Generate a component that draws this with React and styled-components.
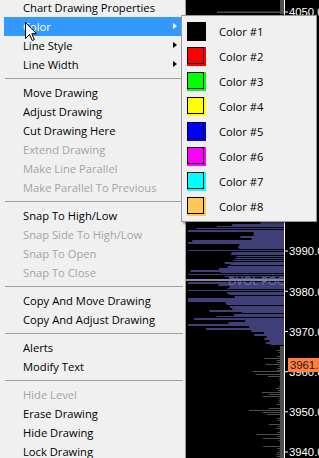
import React from "react";
import styled, { createGlobalStyle } from "styled-components";

const Global = createGlobalStyle`
  html, body { margin: 0; padding: 0; background: #000; }
  body { width: 319px; height: 458px; overflow: hidden; }
`;

const Screen = styled.div`
  position: relative;
  width: 319px;
  height: 458px;
  overflow: hidden;
  display: flex;
  align-items: flex-start;
  background: #000;
  font-family: "Open Sans", "Noto Sans", sans-serif;
`;

const Menu = styled.div`
  flex: none;
  width: 185px;
  margin-top: -2px;
  background: #f0f0f0;
  border-right: 1px solid #a0a0a0;
  display: flex;
  flex-direction: column;
`;

const Item = styled.div`
  position: relative;
  height: 19px;
  margin: 0 3px 0 4px;
  padding-left: 19px;
  display: flex;
  align-items: center;
  font-size: 11.2px;
  white-space: nowrap;
  color: ${(p) => (p.$active ? "#fff" : p.$disabled ? "#a4a4a4" : "#000")};
  background: ${(p) => (p.$active ? "#3399ff" : "transparent")};
`;

const Arrow = styled.span`
  position: absolute;
  right: 5px;
  top: 6px;
  width: 0;
  height: 0;
  border-top: 3.5px solid transparent;
  border-bottom: 3.5px solid transparent;
  border-left: 4px solid ${(p) => (p.$active ? "#fff" : "#000")};
`;

const Sep = styled.div`
  height: 9px;
  margin: 0 2px 0 5px;
  display: flex;
  align-items: center;
  &::after {
    content: "";
    flex: 1;
    height: 1px;
    background: #a0a0a0;
  }
`;

const Chart = styled.div`
  flex: 1;
  align-self: stretch;
  height: 458px;
  background: #000;
  svg { display: block; }
`;

const SubMenu = styled.div`
  position: absolute;
  left: 181px;
  top: 15px;
  width: 136px;
  box-sizing: border-box;
  padding: 3px 2px 2px 5px;
  background: #f0f0f0;
  border: 1px solid #979797;
  box-shadow: 2px 2px 2px rgba(0, 0, 0, 0.35);
  display: flex;
  flex-direction: column;
`;

const ColorRow = styled.div`
  height: 25px;
  display: flex;
  align-items: center;
  gap: 13px;
  font-size: 11.2px;
  color: #000;
  white-space: nowrap;
`;

const Swatch = styled.span`
  position: relative;
  flex: none;
  width: 19px;
  height: 19px;
  background: ${(p) => p.$c};
  &::after {
    content: "";
    position: absolute;
    left: 0;
    top: 0;
    width: 17px;
    height: 17px;
    box-sizing: border-box;
    border: 1px solid #000;
  }
`;

const Cursor = styled.svg`
  position: absolute;
  left: 25px;
  top: 22px;
  overflow: visible;
`;

function rng(seed) {
  let s = seed;
  return () => {
    s = (s * 16807) % 2147483647;
    return (s - 1) / 2147483646;
  };
}

const AX = 98;
const AXIS_FONT = "'Liberation Sans', Arial, sans-serif";

function buildBars() {
  const r = rng(12345);
  const purple = [];
  for (let y = 218; y < 346; y += 2) {
    const t = (y - 218) / 128;
    const env = 18 + 42 * Math.sin(Math.PI * Math.min(1, t * 1.05));
    let len = env + (r() - 0.5) * 14;
    if (r() < 0.3) len += 15 + r() * 55;
    purple.push({ y, h: r() < 0.3 ? 1 : 2, len: Math.min(AX - 2, Math.max(4, len)) });
  }
  const grey = [];
  for (let y = 346; y < 458; y += 2) {
    let len = 3 + r() * 5;
    if (r() < 0.12) len += 8 + r() * 16;
    grey.push({ y, len });
  }
  grey.push({ y: 371, len: 31 });
  grey.push({ y: 410, len: 35 });
  return { purple, grey };
}

const { purple, grey } = buildBars();

const ticks = [
  { y: 12, label: "4050.0" },
  { y: 251, label: "3990.0" },
  { y: 291.3, label: "3980.0" },
  { y: 331.5, label: "3970.0" },
  { y: 371.7, label: "3960.0" },
  { y: 411.8, label: "3950.0" },
  { y: 452, label: "3940.0" },
];

function ChartDrawing() {
  return (
    <svg width="133" height="458" viewBox="0 0 133 458">
      <defs>
        <clipPath id="plot">
          <rect x="0" y="0" width={AX} height="458" />
        </clipPath>
      </defs>
      <rect x={AX - 4} y="0" width="4" height="14" fill="#4e4e4e" />
      <rect x="31" y="11.5" width={AX - 31} height="1.5" fill="#505050" />
      {purple.map((b, i) => (
        <rect key={"p" + i} x={AX - b.len} y={b.y} width={b.len} height={b.h} fill="#403f78" />
      ))}
      <rect x={AX - 4} y="346" width="4" height="112" fill="#4e4e4e" />
      {grey.map((b, i) => (
        <rect key={"g" + i} x={AX - b.len} y={b.y} width={b.len} height="1" fill="#4e4e4e" />
      ))}
      <g clipPath="url(#plot)">
        <rect x="0" y="279" width={AX} height="2" fill="#8a8a9c" />
        <text x="42" y="284.5" fill="#7373a8" fontSize="11.5" fontFamily="'Open Sans', sans-serif">
          DVOL POC
        </text>
      </g>
      <rect x={AX} y="0" width="1" height="458" fill="#fff" />
      {ticks.map((t) => (
        <g key={t.label}>
          <rect x={AX} y={t.y - 0.5} width="4" height="1" fill="#fff" />
          <text x="103" y={t.y + 4.2} fill="#fff" fontSize="11.3" fontFamily={AXIS_FONT}>
            {t.label}
          </text>
        </g>
      ))}
      <rect x="102" y="358" width="31" height="14" fill="#ff8040" />
      <text x="104" y="369.3" fill="#1a1a1a" fontSize="11.3" fontFamily={AXIS_FONT}>
        3961.5
      </text>
    </svg>
  );
}

const menu = [
  { t: "Chart Drawing Properties" },
  { t: "Color", sub: true, active: true },
  { t: "Line Style", sub: true },
  { t: "Line Width", sub: true },
  "sep",
  { t: "Move Drawing" },
  { t: "Adjust Drawing" },
  { t: "Cut Drawing Here" },
  { t: "Extend Drawing", dis: true },
  { t: "Make Line Parallel", dis: true },
  { t: "Make Parallel To Previous", dis: true },
  "sep",
  { t: "Snap To High/Low" },
  { t: "Snap Side To High/Low", dis: true },
  { t: "Snap To Open", dis: true },
  { t: "Snap To Close", dis: true },
  "sep",
  { t: "Copy And Move Drawing" },
  { t: "Copy And Adjust Drawing" },
  "sep",
  { t: "Alerts" },
  { t: "Modify Text" },
  "sep",
  { t: "Hide Level", dis: true },
  { t: "Erase Drawing" },
  { t: "Hide Drawing" },
  { t: "Lock Drawing" },
];

const colors = [
  "#000000",
  "#ff0000",
  "#00ff00",
  "#ffff00",
  "#0000ff",
  "#ff00ff",
  "#00ffff",
  "#ffc757",
];

export default function App() {
  return (
    <>
      <Global />
      <Screen>
        <Menu>
          {menu.map((m, i) =>
            m === "sep" ? (
              <Sep key={i} />
            ) : (
              <Item key={i} $active={m.active} $disabled={m.dis}>
                {m.t}
                {m.sub && <Arrow $active={m.active} />}
              </Item>
            )
          )}
        </Menu>
        <Chart>
          <ChartDrawing />
        </Chart>
        <SubMenu>
          {colors.map((c, i) => (
            <ColorRow key={c}>
              <Swatch $c={c} />
              Color #{i + 1}
            </ColorRow>
          ))}
        </SubMenu>
        <Cursor width="12" height="19" viewBox="0 0 12 19">
          <path
            d="M0.5 0.5 L0.5 16.5 L4.5 12.5 L7.2 18.5 L9.4 17.6 L6.8 11.7 L11.5 11.7 Z"
            fill="#fff"
            stroke="#000"
            strokeWidth="1"
            strokeLinejoin="miter"
          />
        </Cursor>
      </Screen>
    </>
  );
}
